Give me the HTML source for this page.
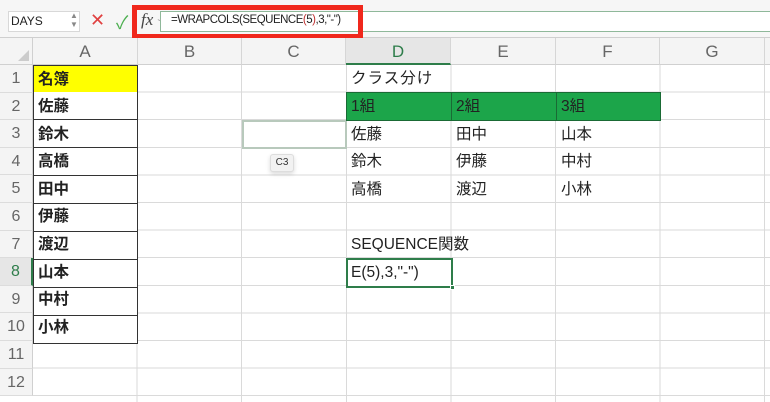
<!DOCTYPE html>
<html><head><meta charset="utf-8"><style>
*{margin:0;padding:0;box-sizing:border-box}
html,body{width:770px;height:402px;overflow:hidden}
body{background:#fff;font-family:"Liberation Sans","Noto Sans CJK JP",sans-serif;position:relative}
.a{position:absolute}
.grid{left:33px;top:65px;width:737px;height:337px;
background-image:repeating-linear-gradient(90deg,transparent 0 103.6px,#dadada 103.6px 104.6px),repeating-linear-gradient(180deg,transparent 0 26.6px,#dadada 26.6px 27.6px);}
.ch{top:38px;height:27px;background:#f4f4f4;border-right:1px solid #d6d6d6;border-bottom:1px solid #d0d0d0;color:#666;font-size:17px;text-align:center;line-height:27px}
.rh{left:0;width:33px;height:27.6px;background:#f4f4f4;border-bottom:1px solid #dcdcdc;border-right:1px solid #d0d0d0;color:#666;font-size:16px;text-align:center;line-height:27px}
.c{height:27.6px;font-size:15.5px;line-height:27px;padding-left:4px;color:#222;white-space:nowrap}
</style></head><body>
<div class="a" style="left:0;top:0;width:770px;height:38px;background:#f6f6f6;border-bottom:1px solid #cfcfcf"></div>
<div class="a" style="left:8px;top:11px;width:72px;height:21px;background:#fff;border:1px solid #d8d8d8;font-size:12px;line-height:19px;padding-left:2px;color:#222">DAYS</div>
<div class="a" style="left:70px;top:11px;font-size:8px;line-height:9px;color:#888">▲<br>▼</div>
<div class="a" style="left:90px;top:10px;font-size:18px;color:#e04040">✕</div>
<div class="a" style="left:116px;top:9px;font-size:18px;color:#4caf50">✓</div>
<div class="a" style="left:160px;top:11px;width:610px;height:21px;background:#fff;border:1px solid #8fb89a;border-right:none"></div>
<div class="a" style="left:132px;top:5px;width:231px;height:34px;border:5px solid #f0281c"></div>
<div class="a" style="left:141px;top:10px;font-family:'Liberation Serif',serif;font-style:italic;font-size:17px;color:#444">fx</div>
<div class="a" style="left:156px;top:14px;font-size:8px;color:#aaa">⌄</div>
<div class="a" style="left:171px;top:14px;font-size:11.5px;color:#222;letter-spacing:-0.5px">=WRAPCOLS(SEQUENCE<span style="color:#c03030">(</span>5<span style="color:#c03030">)</span>,3,"-")</div>
<div class="a" style="left:0;top:38px;width:33px;height:27px;background:#f4f4f4;border-right:1px solid #d0d0d0;border-bottom:1px solid #d0d0d0"></div>
<div class="a" style="left:18px;top:50px;width:0;height:0;border-left:11px solid transparent;border-bottom:11px solid #ccc"></div>
<div class="a ch" style="left:33px;width:105px">A</div>
<div class="a ch" style="left:138px;width:104px">B</div>
<div class="a ch" style="left:242px;width:104px">C</div>
<div class="a ch" style="left:346px;width:105px;background:#e6e6e6;color:#2e7d4a;border-bottom:2px solid #2e7d4a">D</div>
<div class="a ch" style="left:451px;width:105px">E</div>
<div class="a ch" style="left:556px;width:104px">F</div>
<div class="a ch" style="left:660px;width:105px">G</div>
<div class="a ch" style="left:765px;width:10px"></div>
<div class="a grid"></div>
<div class="a rh" style="top:65px">1</div>
<div class="a rh" style="top:92.6px">2</div>
<div class="a rh" style="top:120.2px">3</div>
<div class="a rh" style="top:147.8px">4</div>
<div class="a rh" style="top:175.4px">5</div>
<div class="a rh" style="top:203px">6</div>
<div class="a rh" style="top:230.6px">7</div>
<div class="a rh" style="top:258.2px;background:#e6e6e6;color:#2e7d4a;border-right:2px solid #2e7d4a">8</div>
<div class="a rh" style="top:285.8px">9</div>
<div class="a rh" style="top:313.4px">10</div>
<div class="a rh" style="top:341px">11</div>
<div class="a rh" style="top:368.6px">12</div>
<div class="a c" style="left:33px;top:65px;width:105px;background:#ffff00;border:1px solid #333;font-weight:bold">名簿</div>
<div class="a" style="left:33px;top:92px;width:105px;height:252px;border:1px solid #333;border-top:none;background:#fff;
background-image:repeating-linear-gradient(180deg,transparent 0 27.1px,#333 27.1px 28px)"></div>
<div class="a c" style="left:34px;top:93px;font-weight:bold">佐藤</div>
<div class="a c" style="left:34px;top:120.6px;font-weight:bold">鈴木</div>
<div class="a c" style="left:34px;top:148.2px;font-weight:bold">高橋</div>
<div class="a c" style="left:34px;top:175.8px;font-weight:bold">田中</div>
<div class="a c" style="left:34px;top:203.4px;font-weight:bold">伊藤</div>
<div class="a c" style="left:34px;top:231px;font-weight:bold">渡辺</div>
<div class="a c" style="left:34px;top:258.6px;font-weight:bold">山本</div>
<div class="a c" style="left:34px;top:286.2px;font-weight:bold">中村</div>
<div class="a c" style="left:34px;top:313.8px;font-weight:bold">小林</div>
<div class="a" style="left:242px;top:120px;width:105px;height:29px;border:2px solid #b8c9bc"></div>
<div class="a" style="left:270px;top:154px;width:24px;height:18px;background:#f2f2f2;border:1px solid #ddd;border-radius:3px;font-size:10px;text-align:center;line-height:16px;color:#333;box-shadow:0 2px 5px rgba(0,0,0,.15)">C3</div>
<div class="a c" style="left:347px;top:65px;letter-spacing:1px">クラス分け</div>
<div class="a" style="left:346px;top:92px;width:315px;height:29px;background:#1ca54a;border:1px solid #1a6a35;
background-image:linear-gradient(90deg,transparent 104px,#1a6a35 104px 105px,transparent 105px 209px,#1a6a35 209px 210px,transparent 210px)"></div>
<div class="a c" style="left:347px;top:93px">1組</div>
<div class="a c" style="left:452px;top:93px">2組</div>
<div class="a c" style="left:557px;top:93px">3組</div>
<div class="a c" style="left:347px;top:120.6px">佐藤</div>
<div class="a c" style="left:452px;top:120.6px">田中</div>
<div class="a c" style="left:557px;top:120.6px">山本</div>
<div class="a c" style="left:347px;top:148.2px">鈴木</div>
<div class="a c" style="left:452px;top:148.2px">伊藤</div>
<div class="a c" style="left:557px;top:148.2px">中村</div>
<div class="a c" style="left:347px;top:175.8px">高橋</div>
<div class="a c" style="left:452px;top:175.8px">渡辺</div>
<div class="a c" style="left:557px;top:175.8px">小林</div>
<div class="a c" style="left:347px;top:231px">SEQUENCE関数</div>
<div class="a" style="left:346px;top:258px;width:107px;height:30px;border:2px solid #2e7d4a;background:#fff"></div>
<div class="a" style="left:450px;top:285px;width:5px;height:5px;background:#2e7d4a;border:1px solid #fff"></div>
<div class="a c" style="left:347px;top:259px">E(5),3,"-")</div>
</body></html>
